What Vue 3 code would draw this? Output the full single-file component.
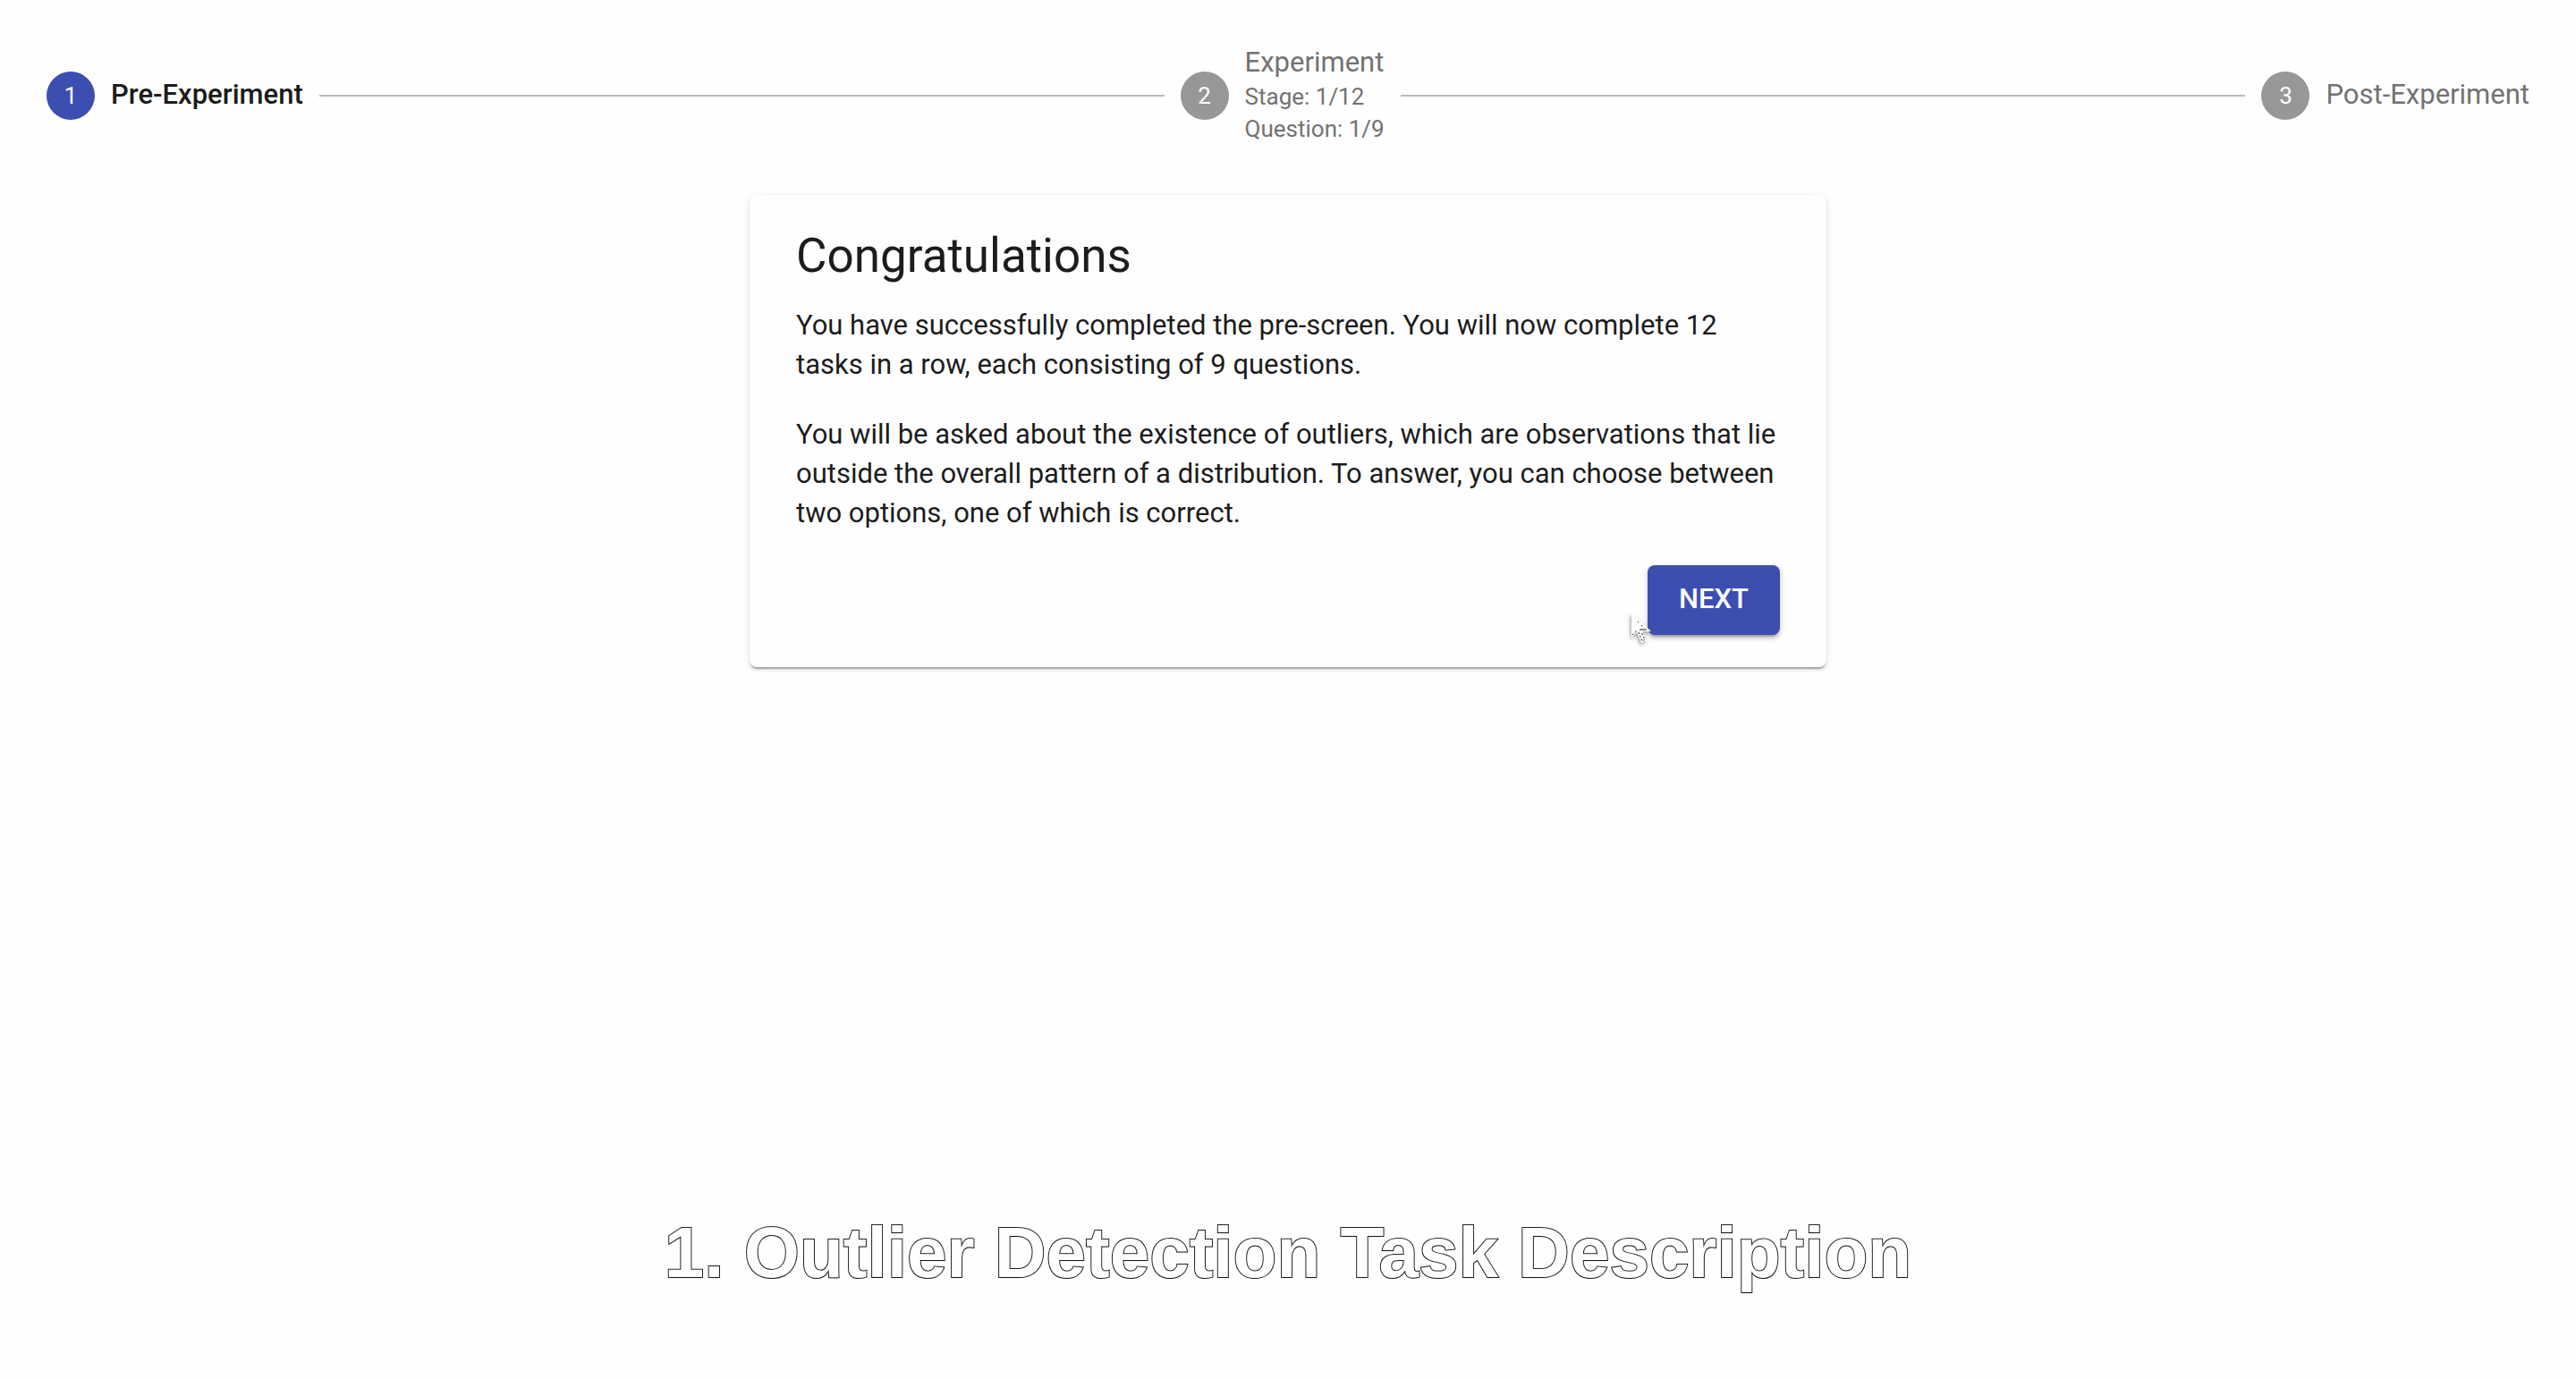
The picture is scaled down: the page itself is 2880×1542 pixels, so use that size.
<script setup>
const steps = [
  { title: 'Pre-Experiment', details: [], active: true },
  { title: 'Experiment', details: ['Stage: 1/12', 'Question: 1/9'], active: false },
  { title: 'Post-Experiment', details: [], active: false },
]
</script>

<template>
  <div class="page">
    <ol class="stepper">
      <template v-for="(step, i) in steps" :key="step.title">
        <li v-if="i > 0" class="connector" aria-hidden="true"></li>
        <li class="step" :class="{ active: step.active }">
          <span class="badge">{{ i + 1 }}</span>
          <span class="label">
            <span class="title">{{ step.title }}</span>
            <span v-for="detail in step.details" :key="detail" class="detail">{{ detail }}</span>
          </span>
        </li>
      </template>
    </ol>

    <main class="card">
      <h1>Congratulations</h1>
      <p>
        You have successfully completed the pre-screen. You will now complete 12 tasks in a row,
        each consisting of 9 questions.
      </p>
      <p>
        You will be asked about the existence of outliers, which are observations that lie outside
        the overall pattern of a distribution. To answer, you can choose between two options, one of
        which is correct.
      </p>
      <div class="actions">
        <button type="button">NEXT</button>
        <svg class="pointer" viewBox="0 0 26 38" aria-hidden="true">
          <path class="arrow" d="M2 1V29L8 23L13 35L19 32L14 22H24Z" />
          <path class="ticks" d="M3 26L8 21M9 11L10 12M13 15L14 16M10 23L14 33L17 31L13 23" />
          <path class="bar" d="M11 20H19" />
        </svg>
      </div>
    </main>

    <footer class="caption">1. Outlier Detection Task Description</footer>
  </div>
</template>

<style>
body {
  margin: 0;
  background: #fefefe;
}
</style>

<style scoped>
.page {
  display: flex;
  flex-direction: column;
  align-items: center;
  box-sizing: border-box;
  min-height: 100vh;
  font-family: Roboto, 'Liberation Sans', sans-serif;
  font-size: 31px;
  color: #1c1c1c;
}

.stepper {
  display: flex;
  align-items: center;
  gap: 18px;
  align-self: stretch;
  margin: 0;
  padding: 52px 52px 56px;
  list-style: none;
}

.step {
  display: flex;
  align-items: center;
  gap: 18px;
  color: #727272;
}

.step.active {
  color: #1c1c1c;
  font-weight: 500;
}

.connector {
  flex: 1;
  height: 2px;
  background: #b9b9b9;
}

.badge {
  display: flex;
  align-items: center;
  justify-content: center;
  width: 54px;
  height: 54px;
  border-radius: 50%;
  background: #979797;
  color: #fff;
  font-size: 26px;
  font-weight: 400;
}

.active .badge {
  background: #3c4eb0;
}

.label {
  display: flex;
  flex-direction: column;
  line-height: 36px;
}

.title {
  padding-bottom: 2px;
}

.detail {
  font-size: 26px;
}

.card {
  box-sizing: border-box;
  width: 100%;
  max-width: 1204px;
  padding: 36px 52px;
  border-radius: 8px;
  background: #fefefe;
  box-shadow:
    0 4px 2px -2px rgba(0, 0, 0, 0.2),
    0 2px 2px rgba(0, 0, 0, 0.14),
    0 2px 6px rgba(0, 0, 0, 0.12);
}

h1 {
  margin: 0 0 24px;
  font-size: 53px;
  font-weight: 400;
  line-height: 64px;
}

p {
  margin: 0;
  line-height: 44px;
}

p + p {
  margin-top: 34px;
}

.actions {
  position: relative;
  display: flex;
  justify-content: flex-end;
  margin-top: 36px;
}

button {
  width: 148px;
  height: 78px;
  padding: 0 0 4px;
  border: 0;
  border-radius: 8px;
  background: #3c4eb0;
  color: #fff;
  font-family: inherit;
  font-size: 31px;
  font-weight: 500;
  box-shadow:
    0 6px 2px -4px rgba(0, 0, 0, 0.2),
    0 4px 4px rgba(0, 0, 0, 0.14),
    0 2px 10px rgba(0, 0, 0, 0.12);
}

.pointer {
  position: absolute;
  right: 142px;
  bottom: -12px;
  width: 26px;
  height: 38px;
  overflow: visible;
  filter: drop-shadow(-1px 2px 2px rgba(0, 0, 0, 0.4));
}

.arrow {
  fill: #fff;
}

.ticks,
.bar {
  fill: none;
  stroke: #111;
  stroke-width: 1;
}

.ticks {
  stroke-dasharray: 2 2;
}

.caption {
  margin-top: auto;
  padding: 0 24px 94px;
  font-family: 'Liberation Sans', sans-serif;
  font-size: 80px;
  font-weight: 700;
  line-height: 94px;
  text-align: center;
  color: #fefefe;
  -webkit-text-stroke: 2px #222;
  paint-order: stroke fill;
  text-shadow: 0 1px 1px rgba(0, 0, 0, 0.4);
}
</style>
